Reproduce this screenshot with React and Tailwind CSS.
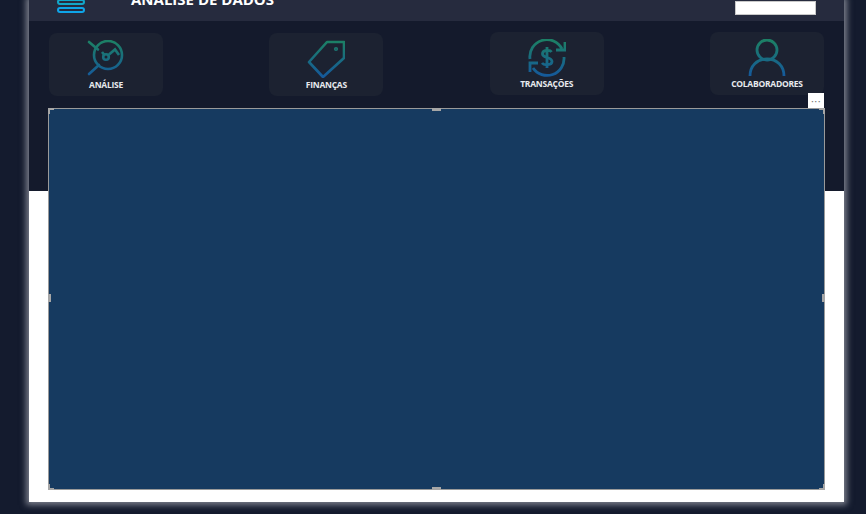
const FONT = "font-['Open_Sans','Noto_Sans',sans-serif]";

// green at the top fading to blue, shared by the four nav icons
function IconGradient({ id }) {
  return (
    <defs>
      <linearGradient id={id} gradientUnits="userSpaceOnUse" x1="0" y1="2" x2="0" y2="36">
        <stop offset="0" stopColor="#1c7f66" />
        <stop offset="1" stopColor="#155a9a" />
      </linearGradient>
    </defs>
  );
}

function AnaliseIcon() {
  return (
    <svg width="40" height="38" viewBox="0 0 40 38" fill="none" stroke="url(#g1)" strokeWidth="2.6">
      <IconGradient id="g1" />
      <circle cx="22" cy="15" r="14" />
      <path d="M3 2 L12 9.5" strokeLinecap="round" />
      <path d="M3 34 L13 25" strokeLinecap="round" />
      <path d="M16 12 L18 14.5 M23 14.5 L29 9.5 L33 15" />
      <circle cx="20" cy="17" r="2.8" />
    </svg>
  );
}

function FinancasIcon() {
  return (
    <svg width="38" height="38" viewBox="0 0 38 38" fill="none" stroke="url(#g2)" strokeWidth="2.6">
      <IconGradient id="g2" />
      <path d="M20 2 L37 2 L37 18 L16 37 L2 22 Z" strokeLinejoin="round" />
      <circle cx="29" cy="9" r="0.8" />
    </svg>
  );
}

function TransacoesIcon() {
  return (
    <svg width="38" height="38" viewBox="0 0 38 38" fill="none" stroke="url(#g3)" strokeWidth="2.8">
      <IconGradient id="g3" />
      <path d="M2 20 A17 17 0 0 1 34 10" />
      <path d="M36 18 A17 17 0 0 1 5 29" />
      <path d="M28 11 L37 11 L37 3" />
      <path d="M10 24 L2 24 L2 33" />
      <path d="M23.5 13 C22 10.5 14.5 10.5 14.5 15 C14.5 19.5 24 17.5 24 22.5 C24 26.5 16 26.5 14 24 M19 8 L19 29" />
    </svg>
  );
}

function ColaboradoresIcon() {
  return (
    <svg width="38" height="38" viewBox="0 0 38 38" fill="none" stroke="url(#g4)" strokeWidth="2.8">
      <IconGradient id="g4" />
      <circle cx="19" cy="11" r="10" />
      <path d="M2 37 C2 27 9 20 19 20 C29 20 36 27 36 37" />
    </svg>
  );
}

const NAV = [
  { label: "ANÁLISE", Icon: AnaliseIcon, box: "" },
  { label: "FINANÇAS", Icon: FinancasIcon, box: "" },
  { label: "TRANSAÇÕES", Icon: TransacoesIcon, box: "-translate-y-px" },
  { label: "COLABORADORES", Icon: ColaboradoresIcon, box: "-translate-y-px" },
];

function NavCard({ label, Icon, box }) {
  return (
    <div className={`flex h-[63px] w-[114px] flex-col items-center rounded-lg bg-[#1c2231] pt-[7px] ${box}`}>
      <div className="flex h-[38px] items-center">
        <Icon />
      </div>
      <span className="text-[8.5px] leading-[14px] font-bold tracking-[-0.25px] text-[#e8eaee]">{label}</span>
    </div>
  );
}

// edit-mode grab handles on the selected visual
function Handle({ className }) {
  return <span className={`absolute ${className}`} />;
}

function Visual() {
  return (
    <div className="relative ml-[19px] mt-[12px] h-[382px] w-[777px] border border-[#9a9a9a] bg-[#163a60]">
      <Handle className="-left-px -top-px h-[6px] w-[6px] border-l-2 border-t-2 border-[#a6a6a6]" />
      <Handle className="-right-px -top-px h-[6px] w-[6px] border-r-2 border-t-2 border-[#a6a6a6]" />
      <Handle className="-bottom-px -left-px h-[6px] w-[6px] border-b-2 border-l-2 border-[#a6a6a6]" />
      <Handle className="-bottom-px -right-px h-[6px] w-[6px] border-b-2 border-r-2 border-[#a6a6a6]" />
      <Handle className="-top-px left-[383px] h-[3px] w-[9px] bg-[#a6a6a6]" />
      <Handle className="-bottom-px left-[383px] h-[3px] w-[9px] bg-[#a6a6a6]" />
      <Handle className="-left-px top-[185px] h-[8px] w-[3px] bg-[#a6a6a6]" />
      <Handle className="-right-px top-[185px] h-[8px] w-[3px] bg-[#a6a6a6]" />
      <div className="absolute -top-[16px] right-0 flex h-[15px] w-[16px] items-center justify-center bg-white text-[11px] leading-none tracking-[0.5px] text-[#777]">
        ···
      </div>
    </div>
  );
}

export default function App() {
  return (
    <div className={`h-[514px] w-[866px] overflow-hidden bg-[#141b2e] pl-[29px] ${FONT}`}>
      <div className="h-[502px] w-[815px] bg-white shadow-[0_0_6px_3px_rgba(205,208,215,0.55)]">
        <div className="h-[191px] bg-[#141a2c]">
          <header className="flex h-[21px] items-end overflow-hidden bg-[#262b3e]">
            <div className="mb-[8px] ml-[28px] flex w-[28px] flex-col gap-[2px]">
              <span className="h-[6px] rounded-[3px] border-2 border-[#12a7c9]" />
              <span className="h-[6px] rounded-[3px] border-2 border-[#0ea5e9]" />
            </div>
            <h1 className="mb-[12px] ml-[46px] text-[15px] leading-[20px] font-bold whitespace-nowrap text-white">
              ANÁLISE DE DADOS
            </h1>
            <div className="mb-[6px] ml-auto mr-[28px] h-[14px] w-[81px] border border-[#c9c9c9] bg-white" />
          </header>
          <nav className="flex justify-between pl-[20px] pr-[20px] pt-[12px]">
            {NAV.map((item) => (
              <NavCard key={item.label} {...item} />
            ))}
          </nav>
          <Visual />
        </div>
      </div>
    </div>
  );
}
